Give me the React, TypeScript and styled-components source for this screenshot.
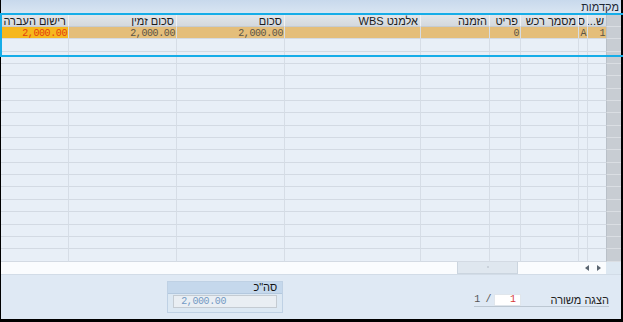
import React from "react";
import styled, { createGlobalStyle } from "styled-components";

const Global = createGlobalStyle`
  html, body { margin: 0; padding: 0; background: #000; overflow: hidden; }
  body { font-family: "Liberation Sans", Arial, sans-serif; }
`;

// right to left: selector, ש, ס, מסמך רכש, פריט, הזמנה, WBS, סכום, סכום זמין, רישום העברה
const COLS = "15px 19px 9px 58px 31px 69px 136px 108px 108px 67px";
const MONO = '"Liberation Mono", "Courier New", monospace';

const Screen = styled.div`
  position: relative;
  width: 623px;
  height: 322px;
  background: #000;
  overflow: hidden;
`;

const Window = styled.div`
  margin-left: 1px;
  width: 620px;
  height: 319px;
  display: flex;
  flex-direction: column;
  direction: rtl;
  background: #dfe9f4;
`;

const TitleBar = styled.div`
  flex: none;
  height: 15px;
  box-sizing: border-box;
  padding: 1px 2px 0 0;
  background: linear-gradient(#c8d9ec, #dbe7f3);
  font-size: 11px;
  line-height: 12px;
  color: #1d2733;
`;

const Table = styled.div`
  flex: none;
  display: flex;
  flex-direction: column;
  background: #e8eff7;
`;

const Row = styled.div<{ $h: number; $variant?: "head" | "active" | "empty" }>`
  display: grid;
  grid-template-columns: ${COLS};
  height: ${(p) => p.$h}px;
  background: ${(p) =>
    p.$variant === "head"
      ? "linear-gradient(#e2e6ea, #d2d7dc)"
      : p.$variant === "active"
      ? "#e4be7a"
      : "#e8eff7"};
`;

const Cell = styled.div<{ $head?: boolean; $sel?: boolean; $hot?: boolean; $mono?: boolean; $last?: boolean }>`
  box-sizing: border-box;
  overflow: hidden;
  white-space: nowrap;
  text-align: right;
  padding-right: ${(p) => (p.$mono ? 1 : 2)}px;
  border-left: ${(p) => (p.$last ? "none" : p.$head ? "1px solid #eef1f4" : "1px solid #d6dde6")};
  border-bottom: 1px solid ${(p) => (p.$head ? "#c5cbd1" : p.$sel ? "#dadee3" : "#d3dae3")};
  font-family: ${(p) => (p.$mono ? MONO : '"Liberation Sans", Arial, sans-serif')};
  font-size: ${(p) => (p.$mono ? 10 : 11)}px;
  letter-spacing: ${(p) => (p.$mono ? "-0.4px" : "0")};
  line-height: 11px;
  padding-top: 1px;
  color: ${(p) => (p.$hot ? "#e4400e" : p.$head ? "#1b1b1b" : "#5b5445")};
  background: ${(p) => (p.$sel ? "#c8cdd3" : p.$hot ? "#f6b71d" : "transparent")};
  ${(p) => (p.$sel ? "border-left: 1px solid #b9c0c8;" : "")}
`;

const ScrollBar = styled.div`
  flex: none;
  height: 13px;
  display: flex;
  background: #fafcfe;
  border-bottom: 1px solid #d2dce7;
  box-sizing: border-box;
`;

const Corner = styled.div`
  width: 15px;
  background: #dde8f2;
`;

const Arrows = styled.div`
  width: 25px;
  display: flex;
  align-items: center;
  justify-content: space-between;
  direction: ltr;
  padding: 0 5px 0 4px;
  box-sizing: border-box;
`;

const Thumb = styled.div`
  width: 61px;
  margin-right: 63px;
  box-sizing: border-box;
  background: #dfe7ef;
  border: 1px solid #cbd5df;
  border-top: none;
  display: flex;
  align-items: center;
  justify-content: center;
  &::after {
    content: "";
    width: 2px;
    height: 2px;
    background: #c9d1da;
  }
`;

const Footer = styled.div`
  flex: 1;
  display: flex;
  align-items: flex-start;
  padding: 6px 12px 0 0;
  background: #dfe9f4;
`;

const Pager = styled.div`
  display: flex;
  align-items: center;
  margin-top: 13px;
  border-bottom: 1px solid #bcc7d2;
  height: 12px;
  font-size: 11px;
  color: #222;
`;

const PagerLabel = styled.span`
  width: 88px;
  line-height: 12px;
`;

const PagerInput = styled.div`
  width: 27px;
  height: 12px;
  box-sizing: border-box;
  background: #fff;
  border: 1px solid #e0e6ec;
  color: #d63a3a;
  font-family: ${MONO};
  font-size: 10px;
  line-height: 10px;
  text-align: right;
  padding-right: 4px;
`;

const PagerTotal = styled.span`
  font-family: ${MONO};
  font-size: 10px;
  color: #555;
  margin-right: 3px;
  direction: ltr;
  white-space: pre;
  letter-spacing: -0.4px;
`;

const Group = styled.div`
  margin-right: 191px;
  width: 116px;
  height: 32px;
  box-sizing: border-box;
  border: 1px solid #bfd1e4;
  background: #dce8f3;
`;

const GroupHead = styled.div`
  height: 11px;
  background: #c5d8ec;
  border-bottom: 1px solid #b3c8de;
  font-size: 11px;
  line-height: 11px;
  padding-right: 5px;
  color: #111;
`;

const GroupField = styled.div`
  margin: 1px 5px 0 5px;
  height: 13px;
  box-sizing: border-box;
  background: #e9eef3;
  border: 1px solid #c4cbd2;
  direction: ltr;
  padding-left: 7px;
  font-family: ${MONO};
  font-size: 10px;
  letter-spacing: -0.4px;
  line-height: 11px;
  color: #7399c4;
`;

const Highlight = styled.div`
  position: absolute;
  left: 0;
  top: 13px;
  width: 640px;
  height: 44px;
  box-sizing: border-box;
  border: 2px solid #16ade8;
  pointer-events: none;
`;

const Tri = ({ dir }: { dir: "l" | "r" }) => (
  <svg width="4" height="6" viewBox="0 0 4 6">
    <path d={dir === "l" ? "M4 0 L0 3 L4 6 Z" : "M0 0 L4 3 L0 6 Z"} fill="#5a6570" />
  </svg>
);

const headers = ["", "ש...", "ס", "מסמך רכש", "פריט", "הזמנה", "אלמנט WBS", "סכום", "סכום זמין", "רישום העברה"];
const dataRow = ["", "1", "A", "", "0", "", "", "2,000.00", "2,000.00", "2,000.00"];
const ROW_H = 12.35;

export default function App() {
  return (
    <>
      <Global />
      <Screen>
        <Window>
          <TitleBar>מקדמות</TitleBar>
          <Table>
            <Row $h={12} $variant="head">
              {headers.map((h, i) => (
                <Cell key={i} $head={i > 0} $sel={i === 0} $last={i === 9}>
                  {h}
                </Cell>
              ))}
            </Row>
            <Row $h={ROW_H} $variant="active">
              {dataRow.map((d, i) => (
                <Cell key={i} $sel={i === 0} $hot={i === 9} $mono $last={i === 9}>
                  {d}
                </Cell>
              ))}
            </Row>
            {Array.from({ length: 18 }).map((_, r) => (
              <Row key={r} $h={ROW_H}>
                {headers.map((_, i) => (
                  <Cell key={i} $sel={i === 0} $last={i === 9} />
                ))}
              </Row>
            ))}
          </Table>
          <ScrollBar>
            <Corner />
            <Arrows>
              <Tri dir="l" />
              <Tri dir="r" />
            </Arrows>
            <Thumb />
          </ScrollBar>
          <Footer>
            <Pager>
              <PagerLabel>הצגה משורה</PagerLabel>
              <PagerInput>1</PagerInput>
              <PagerTotal>1 /</PagerTotal>
            </Pager>
            <Group>
              <GroupHead>סה"כ</GroupHead>
              <GroupField>2,000.00</GroupField>
            </Group>
          </Footer>
        </Window>
        <Highlight />
      </Screen>
    </>
  );
}
